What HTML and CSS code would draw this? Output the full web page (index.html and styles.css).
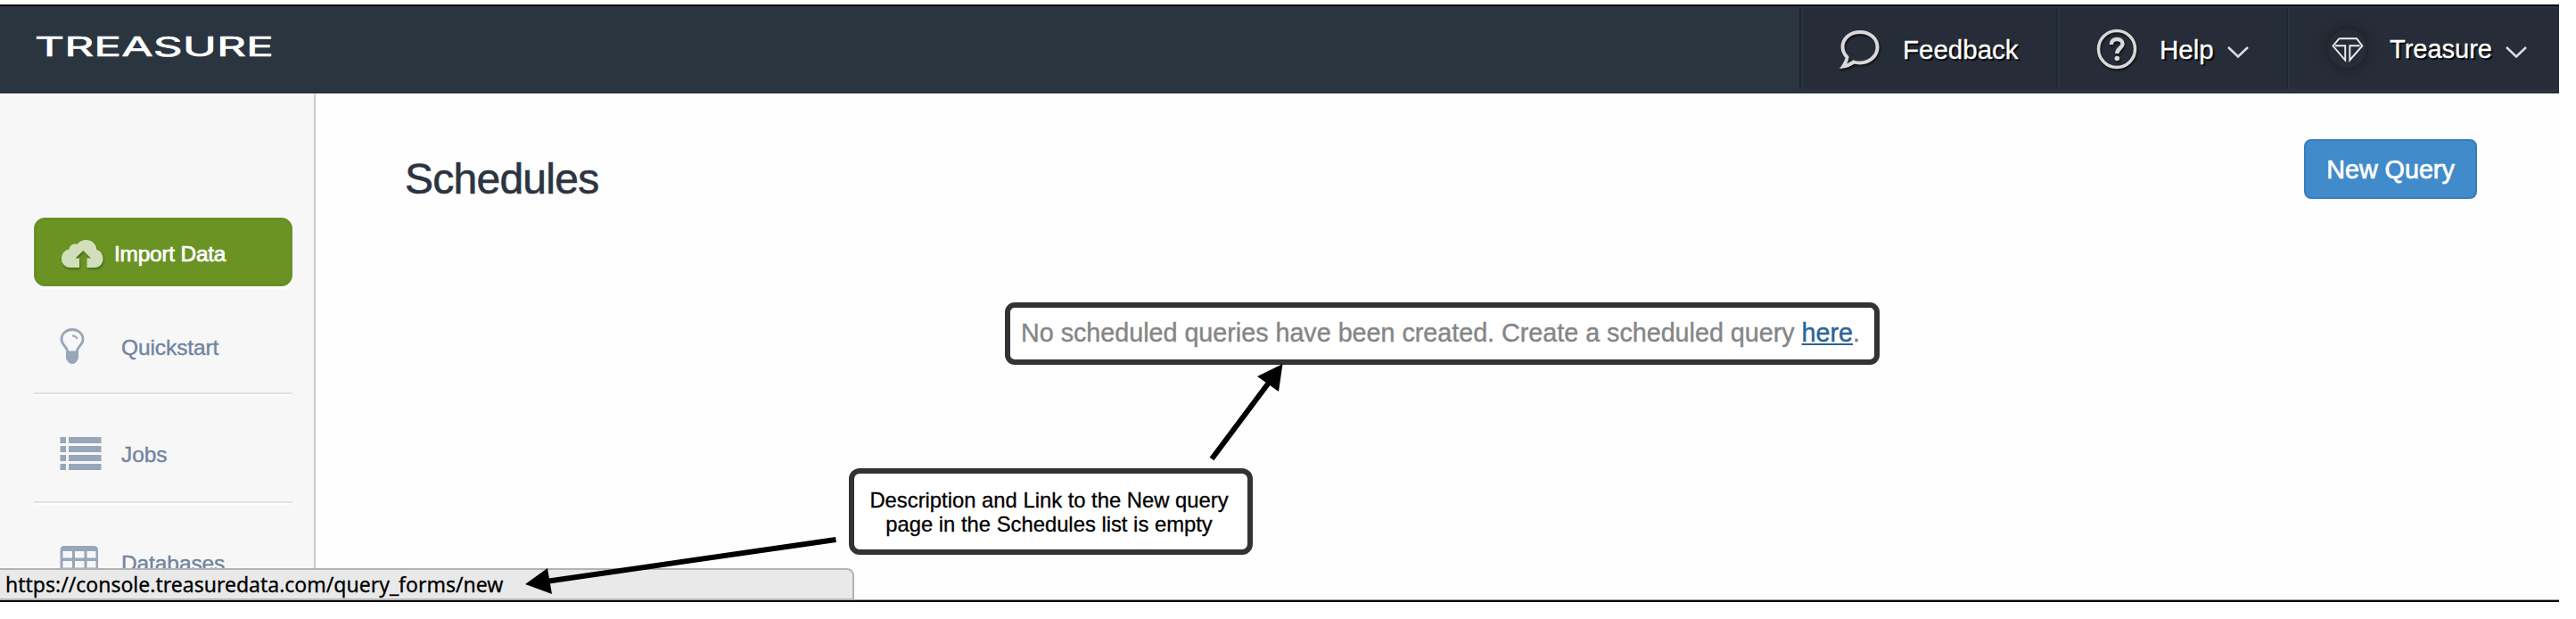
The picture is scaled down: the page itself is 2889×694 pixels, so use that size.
FILE: index.html
```html
<!DOCTYPE html>
<html lang="en">
<head>
<meta charset="utf-8">
<title>Schedules</title>
<link rel="stylesheet" href="styles.css">
</head>
<body>
<div class="window">
  <header class="topbar">
    <svg class="logo" width="268" height="30" viewBox="0 0 268 30"><text x="-1" y="24" textLength="268" lengthAdjust="spacingAndGlyphs">TREASURE</text></svg>
    <nav class="nav">
      <a class="nav-item feedback">
        <svg class="glyph" width="46" height="44" viewBox="0 0 46 44"><path d="M23 3C12 3 3.500 10 3.500 19.500C3.500 24.500 5.500 28 8.500 31C8.500 35 6 38.500 4 41.500C9 41 13 38.500 16 36.500C18 37.300 20.500 37.500 23 37.500C34 37.500 42.500 29.500 42.500 20C42.500 10 34 3 23 3Z"/></svg>
        <span>Feedback</span>
      </a>
      <a class="nav-item help">
        <svg class="glyph" width="46" height="46" viewBox="0 0 46 46"><circle cx="23" cy="23" r="20.500"/><path class="thick" d="M16.800 18C16.800 14 19.500 12 23.200 12C27 12 29.500 14.200 29.500 17.300C29.500 22 23.300 22.200 23.300 28"/><circle class="dot" cx="23.300" cy="33.500" r="2.800"/></svg>
        <span>Help</span>
        <svg class="chevron" width="24" height="14" viewBox="0 0 24 14"><path d="M1 1L12 11.500L23 1"/></svg>
      </a>
      <a class="nav-item account">
        <span class="avatar"><svg width="36" height="30" viewBox="0 0 36 30"><path d="M8.500 3.200H28L34.300 11.500L20.300 27.500V11.200H31.500M8.500 3.200L1.500 11.500L15.200 27.500V11.200H4"/></svg></span>
        <span>Treasure</span>
        <svg class="chevron" width="24" height="14" viewBox="0 0 24 14"><path d="M1 1L12 11.500L23 1"/></svg>
      </a>
    </nav>
  </header>
  <div class="body">
    <aside class="sidebar">
      <a class="import">
        <svg width="50" height="36" viewBox="0 0 50 36"><path d="M11 33C5 33 1 28.500 1 23C1 17.500 4.500 13.500 9.500 12.500C10 8 14.500 5.500 18.500 7C21 3.500 24.500 2 28.500 2C35 2 40 6.500 40.500 13C44.500 14 47.500 18 47.500 23C47.500 29 43.500 33 38 33H29.500V22.500H34L25.300 14L16.500 22.500H21V33Z"/></svg>
        <span>Import Data</span>
      </a>
      <a class="side-item">
        <svg width="48" height="42" viewBox="-.5 0 48 42"><path class="bulb" d="M8.500 27C8.500 21 1.500 19 1.500 12.500C1.500 6 7 1.500 13.500 1.500C20 1.500 25.500 6 25.500 12.500C25.500 19 18.500 21 18.500 27Z"/><path class="shine" d="M13.500 8.500C16.500 8.500 18.500 10 19 12"/><path d="M6.500 26H20.500V34L18 38C16 39 16 40 13.500 40C11 40 11 39 9 38L6.500 34Z"/></svg>
        <span>Quickstart</span>
      </a>
      <a class="side-item">
        <svg width="48" height="38" viewBox="0 0 48 38"><path d="M.500 0H7V7H.500ZM10 0H46.500V7H10ZM.500 10H7V17H.500ZM10 10H46.500V17H10ZM.500 20H7V27H.500ZM10 20H46.500V27H10ZM.500 30H7V37H.500ZM10 30H46.500V37H10Z"/></svg>
        <span>Jobs</span>
      </a>
      <a class="side-item databases">
        <svg width="48" height="38" viewBox="0 0 48 38"><path fill-rule="evenodd" d="M5 0H38Q43 0 43 5V33Q43 38 38 38H5Q.500 38 .500 33V5Q.500 0 5 0ZM3.500 6V13.500H14V6ZM17 6V13.500H27.500V6ZM30.500 6V13.500H40.500V6ZM3.500 17V24.500H14V17ZM17 17V24.500H27.500V17ZM30.500 17V24.500H40.500V17Z"/></svg>
        <span>Databases</span>
      </a>
    </aside>
    <main class="content">
      <div class="heading">
        <h1>Schedules</h1>
        <a class="new-query">New Query</a>
      </div>
      <p class="empty">No scheduled queries have been created. Create a scheduled query <a>here</a>.</p>
    </main>
  </div>
  <div class="status">https://console.treasuredata.com/query_forms/new</div>
  <div class="callout">Description and Link to the New query<br>page in the Schedules list is empty</div>
  <svg class="arrows" width="2870" height="670" viewBox="0 5 2870 670">
    <path class="shaft" d="M1359 514.500L1423 429M937.500 605L612 652"/>
    <path d="M1438.500 408L1410 422L1434 439ZM589 655L614 637L619 666Z"/>
  </svg>
</div>
</body>
</html>
```

FILE: styles.css
```css
* { box-sizing: border-box; }
body {
  margin: 0;
  padding-top: 5px;
  background: #fff;
  font-family: "Liberation Sans", Arial, sans-serif;
}
svg { display: block; flex: none; }
.window {
  position: relative;
  width: 2870px;
  height: 670px;
  overflow: hidden;
  background: #fefefe;
  border-bottom: 2px solid #000;
  box-shadow: inset 0 -1px #999;
}
.topbar {
  display: flex;
  justify-content: space-between;
  height: 100px;
  padding-left: 40px;
  background: #2b3540;
  border-top: 2px solid #0c0f13;
  border-bottom: 1px solid #70757d;
  box-shadow: inset 0 -1px #171d25;
}
.logo { margin-top: 32px; overflow: visible; }
.logo text {
  font: 400 30px Inter, sans-serif;
  fill: #fff;
  stroke: #fff;
  stroke-width: .6px;
}
.nav { display: flex; padding: 2px 0 4px; }
.nav-item {
  display: flex;
  align-items: center;
  border-left: 2px solid #1e262f;
  box-shadow: inset 2px 0 #2b3540;
  background: #262d39;
  color: #fff;
  font-size: 29.5px;
  text-shadow: 2px 2px 1px #000;
}
.nav-item > span:not(.avatar) { padding-top: 2px; -webkit-text-stroke: .3px; }
.feedback { width: 288px; padding-left: 43px; }
.help { width: 258px; padding-left: 43px; }
.account { width: 306px; padding-left: 45px; font-size: 29px; }
.glyph { margin-right: 25px; fill: none; stroke: #d8d8d8; stroke-width: 4; filter: drop-shadow(1px 2px 1px #111); }
.help .glyph { stroke-width: 3.5; }
.glyph .thick { stroke-width: 4.5; }
.glyph .dot { fill: #d8d8d8; stroke: none; }
.chevron { margin: 9px 0 0 15px; fill: none; stroke: #ddd; stroke-width: 2.5; }
.avatar {
  display: grid;
  place-items: center;
  width: 43px;
  height: 43px;
  margin-right: 26px;
  border-radius: 50%;
  box-shadow: 0 0 14px 3px #202123;
}
.avatar svg { fill: none; stroke: #eee; stroke-width: 1.9; }
.body { display: flex; height: 570px; }
.sidebar {
  width: 354px;
  padding: 139px 24px 0 38px;
  background: #f7f7f7;
  border-right: 2px solid #ccc;
}
.import {
  display: flex;
  align-items: center;
  height: 77px;
  margin-bottom: 20px;
  padding: 4px 0 0 29px;
  border: 1px solid #6d9834;
  border-radius: 12px;
  background: #6a9324;
  box-shadow: inset 0 0 2px #4f7a16, 0 3px 2px #fff;
  color: #fff;
  font-size: 24.4px;
  letter-spacing: -.2px;
  -webkit-text-stroke: .7px #fff;
}
.import svg { margin-right: 10px; fill: #d2dfbd; filter: drop-shadow(1px 2px 1px #4a6d12); }
.side-item {
  display: flex;
  align-items: center;
  height: 122px;
  padding: 13px 0 0 29px;
  gap: 21px;
  border-bottom: 2px solid #dae3eb;
  box-shadow: 0 3px 2px -1px #fff;
  color: #70859f;
  font-size: 24.5px;
  letter-spacing: -.1px;
  -webkit-text-stroke: .4px #70859f;
}
.side-item span { padding-top: 2px; }
.side-item:nth-child(2) { height: 101px; padding: 0 0 4px 29px; }
.side-item svg { fill: #98a6b9; stroke: none; }
.side-item .bulb, .side-item .shine { fill: none; stroke: #98a6b9; stroke-width: 2.8; }
.side-item .shine { stroke-width: 1.8; }
.content { flex: 1; padding: 51px 92px 0 100px; }
.heading { display: flex; justify-content: space-between; }
h1 {
  margin: 17px 0 0;
  height: 55px;
  color: #2b3440;
  font-size: 48px;
  font-weight: 400;
  letter-spacing: -.75px;
  line-height: 56px;
  -webkit-text-stroke: .6px #2b3440;
}
.new-query {
  width: 194px;
  height: 67px;
  border: 2px solid #357ebd;
  border-radius: 8px;
  background: #428bca;
  color: #fff;
  font-size: 28.7px;
  line-height: 64px;
  text-align: center;
  -webkit-text-stroke: .7px #fff;
}
.empty {
  width: 981px;
  height: 70px;
  margin: 111px 0 0 673px;
  padding-left: 12px;
  border: 6px solid #333;
  border-radius: 11px;
  background: #fff;
  color: #858585;
  font-size: 28.7px;
  line-height: 56px;
  white-space: nowrap;
  -webkit-text-stroke: .4px;
}
.empty a { color: #2a6496; text-decoration: underline; text-decoration-thickness: 2px; text-underline-offset: 2px; }
.status {
  position: absolute;
  left: -2px;
  bottom: 0;
  width: 960px;
  height: 36px;
  padding-left: 6px;
  border: 2px solid #b3b3b3;
  border-radius: 0 8px 0 0;
  background: #e9e9e9;
  color: #000;
  font: 23px/33px "Noto Sans", sans-serif;
  white-space: nowrap;
  -webkit-text-stroke: .3px;
}
.callout {
  position: absolute;
  left: 952px;
  top: 519.5px;
  width: 453px;
  height: 97px;
  padding: 16px 4px 0 0;
  border: 6px solid #333;
  border-radius: 12px;
  background: #fff;
  color: #000;
  font-size: 23.8px;
  line-height: 27px;
  text-align: center;
  white-space: nowrap;
  -webkit-text-stroke: .3px;
}
.arrows { position: absolute; left: 0; top: 0; }
.shaft { fill: none; stroke: #000; stroke-width: 6; }
```
